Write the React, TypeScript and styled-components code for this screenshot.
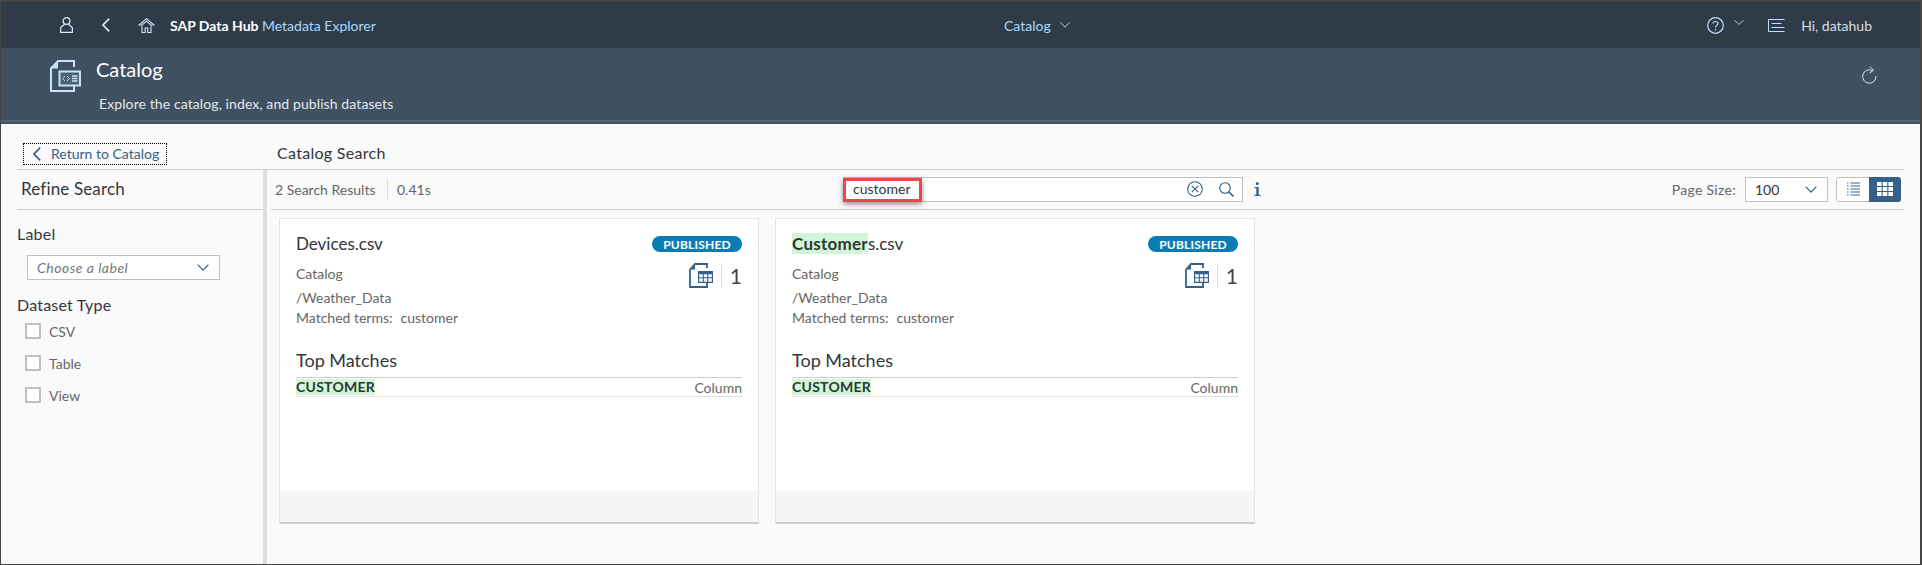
import React from 'react';
import styled, { createGlobalStyle } from 'styled-components';

const GlobalStyle = createGlobalStyle`
  html, body {
    margin: 0;
    padding: 0;
    background: #fafafa;
    font-family: Lato, "Liberation Sans", sans-serif;
  }
`;

const Frame = styled.div`
  box-sizing: border-box;
  width: 1922px;
  height: 565px;
  display: flex;
  flex-direction: column;
  border-style: solid;
  border-color: #444;
  border-width: 2px 2px 1px 1px;
  overflow: hidden;
  background: #fafafa;
  color: #32363a;
`;

const ShellBar = styled.header`
  height: 46px;
  flex: none;
  display: grid;
  grid-template-columns: 1003px auto 1fr;
  align-items: center;
  background: #2f3c48;
  color: #fff;
  font-size: 14px;
`;

const ShellLeft = styled.div`
  display: flex;
  align-items: center;
  padding-left: 59px;
`;

const ShellIcon = styled.span<{ $gap: number }>`
  display: inline-flex;
  margin-right: ${({ $gap }) => $gap}px;
  color: #d1e8ff;
`;

const HelpCaret = styled(ShellIcon)`
  margin-bottom: 6px;
  color: #a9d8ff;
`;

const ShellTitle = styled.div`
  font-weight: 700;
  white-space: nowrap;

  span {
    font-weight: 400;
    color: #a9d8ff;
  }
`;

const ShellCenter = styled.div`
  display: flex;
  align-items: center;
  gap: 9px;
  color: #a9d8ff;
`;

const ShellRight = styled.div`
  display: flex;
  justify-content: flex-end;
  align-items: center;
  padding-right: 48px;
  color: #d9dfe5;
`;

const PageHeader = styled.section`
  height: 76px;
  flex: none;
  display: flex;
  padding: 12px 43px 0 49px;
  box-sizing: border-box;
  background: #3f5161;
  box-shadow: inset 0 -2px #3f5161, inset 0 -4px #4f6578;
  color: #fff;
`;

const HeaderText = styled.div`
  margin-left: 15px;
`;

const HeaderTitle = styled.h1`
  margin: -3px 0 0;
  font-size: 20px;
  line-height: 24px;
  font-weight: 400;
`;

const HeaderSub = styled.p`
  margin: 15px 0 0 3px;
  font-size: 14px;
  line-height: 16px;
  letter-spacing: 0.1px;
  color: #e4e8ec;
`;

const HeaderRefresh = styled.span`
  margin: 6px 0 0 auto;
  display: inline-flex;
  color: #dfe5ea;
`;

const Body = styled.main`
  flex: 1;
  min-height: 0;
  display: flex;
  flex-direction: column;
`;

const CrumbRow = styled.div`
  height: 46px;
  flex: none;
  box-sizing: border-box;
  margin: 0 16px;
  padding: 0 0 4px 6px;
  display: flex;
  align-items: flex-end;
  border-bottom: 1px solid #ccc;
`;

const ReturnButton = styled.button`
  width: 144px;
  height: 22px;
  padding: 0 0 1px 9px;
  display: flex;
  align-items: center;
  gap: 10px;
  box-sizing: border-box;
  border: 1px dotted #000;
  background: transparent;
  color: #346187;
  font: inherit;
  font-size: 14px;
`;

const CrumbTitle = styled.div`
  margin: 0 0 1px 110px;
  font-size: 16px;
  line-height: 22px;
  letter-spacing: 0.3px;
  color: #32363a;
`;

const Lower = styled.div`
  flex: 1;
  min-height: 0;
  display: flex;
`;

const Sidebar = styled.aside`
  width: 262px;
  flex: none;
  box-sizing: border-box;
  padding-left: 16px;
`;

const SidebarTitle = styled.div`
  height: 40px;
  box-sizing: border-box;
  padding: 9px 0 0 4px;
  font-size: 17px;
  line-height: 20px;
  letter-spacing: 0.15px;
  border-bottom: 1px solid #ccc;
`;

const FilterLabel = styled.div<{ $top: number }>`
  margin-top: ${({ $top }) => $top}px;
  font-size: 16px;
  line-height: 20px;
  letter-spacing: 0.2px;
`;

const LabelSelect = styled.div`
  margin: 11px 0 0 10px;
  width: 193px;
  height: 25px;
  box-sizing: border-box;
  padding: 0 10px 0 9px;
  display: flex;
  align-items: center;
  justify-content: space-between;
  border: 1px solid #bfbfbf;
  background: #fff;
  font-size: 14px;
  font-style: italic;
  letter-spacing: 0.5px;
  color: #74777a;
`;

const CheckRow = styled.label`
  height: 32px;
  margin-left: 8px;
  display: flex;
  align-items: center;
  gap: 8px;
  font-size: 14px;
  color: #666;
`;

const CheckBox = styled.span`
  width: 16px;
  height: 16px;
  box-sizing: border-box;
  border: 2px solid #bfbfbf;
  background: #fff;
`;

const Splitter = styled.div`
  width: 4px;
  flex: none;
  background: #ddd;
`;

const Content = styled.div`
  flex: 1;
  min-width: 0;
  display: flex;
  flex-direction: column;
`;

const Toolbar = styled.div`
  height: 40px;
  flex: none;
  box-sizing: border-box;
  margin: 0 16px 0 4px;
  display: flex;
  align-items: center;
  border-bottom: 1px solid #ccc;
  padding-bottom: 1px;
  font-size: 14px;
  color: #666;
`;

const ResultInfo = styled.div`
  width: 572px;
  flex: none;
  box-sizing: border-box;
  padding-left: 4px;
  display: flex;
  align-items: center;
  align-self: stretch;
`;

const ResultCount = styled.span`
  width: 112px;
`;

const ResultTime = styled.span`
  align-self: stretch;
  display: flex;
  align-items: center;
  padding-left: 9px;
  border-left: 1px solid #ddd;
  margin-top: 8px;
  margin-bottom: 8px;
`;

const SearchBox = styled.div`
  position: relative;
  width: 400px;
  height: 25px;
  box-sizing: border-box;
  padding: 0 8px 0 9px;
  display: flex;
  align-items: center;
  gap: 16px;
  border: 1px solid #bfbfbf;
  background: #fff;
  color: #32363a;
`;

const SearchText = styled.span`
  flex: 1;
  padding-bottom: 2px;
`;

const RedMark = styled.span`
  position: absolute;
  left: -1px;
  top: 0;
  width: 79px;
  height: 24px;
  box-sizing: border-box;
  border: 3px solid #f0444a;
  box-shadow: 0 2px 5px rgba(0, 0, 0, 0.45);
`;

const ActionIcon = styled.span`
  display: inline-flex;
  color: #346187;
`;

const InfoMark = styled.span`
  margin-left: 11px;
  display: inline-flex;
  color: #346187;
`;

const PageSize = styled.div`
  margin-left: auto;
  display: flex;
  align-items: center;
`;

const PageLabel = styled.span`
  letter-spacing: 0.3px;
`;

const PageSelect = styled.div`
  width: 83px;
  height: 25px;
  margin-left: 9px;
  box-sizing: border-box;
  padding: 0 10px 0 9px;
  display: flex;
  align-items: center;
  justify-content: space-between;
  border: 1px solid #bfbfbf;
  background: #fff;
  color: #32363a;
`;

const ViewToggle = styled.div`
  margin: 0 3px 0 8px;
  display: flex;
  height: 25px;
  border-radius: 3px;
  border: 1px solid #bfbfbf;
  box-sizing: border-box;
`;

const ViewButton = styled.span<{ $active?: boolean }>`
  width: 32px;
  margin: ${({ $active }) => ($active ? '-1px -1px -1px 0' : '0')};
  border-radius: ${({ $active }) => ($active ? '0 3px 3px 0' : '3px 0 0 3px')};
  display: flex;
  align-items: center;
  justify-content: center;
  background: ${({ $active }) => ($active ? '#346187' : '#fff')};
  color: ${({ $active }) => ($active ? '#fff' : '#346187')};
`;

const CardRow = styled.div`
  display: flex;
  gap: 16px;
  padding: 8px 0 0 12px;
`;

const Card = styled.article`
  width: 480px;
  height: 306px;
  box-sizing: border-box;
  display: flex;
  flex-direction: column;
  background: #fff;
  border: 1px solid #e5e5e5;
  border-bottom: 2px solid #ccc;
`;

const CardBody = styled.div`
  flex: 1;
  padding: 16px 16px 0;
`;

const CardHead = styled.div`
  height: 18px;
  display: flex;
  align-items: center;
  justify-content: space-between;
`;

const CardTitle = styled.div`
  font-size: 17px;
  line-height: 18px;
  color: #32363a;
`;

const Hit = styled.mark`
  background: #d2f5d9;
  color: #2b3a30;
  font-weight: 700;
  letter-spacing: 0.25px;
`;

const Badge = styled.span`
  width: 90px;
  height: 16px;
  display: flex;
  align-items: center;
  justify-content: center;
  border-radius: 8px;
  background: #0a7db3;
  color: #fff;
  font-size: 12px;
  font-weight: 700;
  letter-spacing: 0.2px;
`;

const CardMid = styled.div`
  display: flex;
  justify-content: space-between;
  align-items: flex-start;
  margin-top: 10px;
`;

const Meta = styled.div`
  font-size: 14px;
  line-height: 20px;
  color: #666;
  padding-top: 1px;
`;

const MetaLine = styled.div<{ $top?: number }>`
  margin-top: ${({ $top }) => $top ?? 0}px;
`;

const MatchedTerm = styled.span`
  margin-left: 8px;
`;

const CountBox = styled.div`
  display: flex;
  align-items: center;
  height: 25px;
  font-size: 21px;
  color: #444;
`;

const CountValue = styled.span`
  margin-left: 8px;
  padding-left: 8px;
  border-left: 1px solid #ddd;
  line-height: 25px;
`;

const MatchesTitle = styled.div`
  margin-top: 20px;
  font-size: 18px;
  line-height: 24px;
`;

const MatchRow = styled.div`
  margin-top: 5px;
  height: 20px;
  box-sizing: border-box;
  padding-top: 1px;
  display: flex;
  align-items: flex-start;
  justify-content: space-between;
  border-top: 1px solid #ccc;
  border-bottom: 1px solid #e2e2e2;
  font-size: 14px;
  line-height: 16px;
  color: #666;
`;

const MatchColumn = styled.span`
  padding-top: 1px;
`;

const CardFoot = styled.div`
  height: 31px;
  flex: none;
  background: #f5f5f5;
`;

const UserIcon = () => (
  <svg width="13" height="16" viewBox="0 0 13 16" fill="none" stroke="currentColor" strokeWidth="1.3">
    <circle cx="6.5" cy="4" r="3.4" />
    <path d="M4.6 7.2 1 10.2a1 1 0 0 0-.4.9v4.3h11.800v-4.300a1 1 0 0 0-.4-.9L8.400 7.200" />
  </svg>
);

const BackIcon = ({ w = 8, h = 14 }: { w?: number; h?: number }) => (
  <svg width={w} height={h} viewBox="0 0 8 14" fill="none" stroke="currentColor" strokeWidth="1.7">
    <path d="M7.2.6 1 7l6.2 6.4" />
  </svg>
);

const HomeIcon = () => (
  <svg width="17" height="15" viewBox="0 0 17 15" fill="none" stroke="currentColor" strokeWidth="1.1">
    <path d="M.5 7.500 8.500.7l8 6.800M2.800 8 8.500 3.200 14.200 8M4 8.500v6h3.200v-4.500h2.600v4.500H13v-6" />
  </svg>
);

const Chevron = ({ w = 10, h = 6 }: { w?: number; h?: number }) => (
  <svg width={w} height={h} viewBox="0 0 10 6" fill="none" stroke="currentColor" strokeWidth="1" preserveAspectRatio="none">
    <path d="M.5.5 5 5.200 9.500.5" />
  </svg>
);

const HelpIcon = () => (
  <svg width="17" height="17" viewBox="0 0 17 17" fill="none" stroke="#bfe0ff" strokeWidth="1.200">
    <circle cx="8.500" cy="8.500" r="7.800" />
    <path d="M6 6.500C6 3.800 11 3.800 11 6.500 11 8.500 8.500 8.300 8.500 10.500M8.500 12v1.400" />
  </svg>
);

const RequestIcon = () => (
  <svg width="17" height="13" viewBox="0 0 17 13" fill="none" stroke="#bfe0ff" strokeWidth="1">
    <path d="M16.500.5H.5v12h16M3.500 4.500h10M3.500 8.500h13" />
  </svg>
);

const DocIcon = () => (
  <svg width="31" height="32" viewBox="0 0 31 32" fill="none">
    <path d="M24 7V1H8L1 8.500V31h23v-5" stroke="#c5e3fb" strokeWidth="2" />
    <path d="M1 8.500 8 1v7.500z" fill="#c5e3fb" />
    <rect x="9.500" y="11.500" width="20.500" height="14" fill="#4d6274" stroke="#c5e3fb" strokeWidth="2" />
    <path d="M15 16l-2.500 2.500L15 21M17 16l2.500 2.500L17 21" stroke="#c5e3fb" strokeWidth=".9" />
    <path d="M22 16h5.500M22 18.500h5.500M22 21h5.500" stroke="#c5e3fb" strokeWidth="1.300" />
  </svg>
);

const RefreshIcon = () => (
  <svg width="16" height="18" viewBox="0 0 16 18" fill="none" stroke="currentColor" strokeWidth="1">
    <path d="M11.500 4.600A6.700 6.700 0 1 0 15 10M9 .5l3.500 3.800L8.600 7" />
  </svg>
);

const ClearIcon = () => (
  <svg width="16" height="16" viewBox="0 0 16 16" fill="none" stroke="currentColor" strokeWidth="1.1">
    <circle cx="8" cy="8" r="7.300" />
    <path d="M4.800 4.800l6.400 6.400M11.200 4.800l-6.400 6.400" />
  </svg>
);

const SearchIcon = () => (
  <svg width="15" height="15" viewBox="0 0 15 15" fill="none" stroke="currentColor" strokeWidth="1.1">
    <circle cx="6" cy="6" r="5.300" />
    <path d="M9.800 9.800 14.500 14.500" strokeWidth="1.600" />
  </svg>
);

const InfoIcon = () => (
  <svg width="7" height="14" viewBox="0 0 7 14" fill="currentColor">
    <circle cx="3.300" cy="1.500" r="1.500" />
    <path d="M.5 5h4.200v7.700H6.500V14H.5v-1.300h1.800V6.300H.5z" />
  </svg>
);

const ListIcon = () => (
  <svg width="13" height="14" viewBox="0 0 13 14" fill="none" stroke="currentColor">
    <path d="M0 1h1.500M3.500 1H13M0 4h1.500M3.500 4H13M0 7h1.500M3.500 7H13M0 10h1.500M3.500 10H13M0 13h1.500M3.500 13H13" />
  </svg>
);

const GridIcon = () => (
  <svg width="16" height="14" viewBox="0 0 16 14" fill="currentColor">
    <path d="M0 0h4.600v4H0zM5.700 0h4.600v4H5.700zM11.400 0H16v4h-4.600zM0 5h4.600v4H0zM5.700 5h4.600v4H5.700zM11.400 5H16v4h-4.600zM0 10h4.600v4H0zM5.700 10h4.600v4H5.700zM11.400 10H16v4h-4.600z" />
  </svg>
);

const TableDocIcon = () => (
  <svg width="24" height="25" viewBox="0 0 24 25" fill="none">
    <path d="M18 5V1H6L1 6.500V24h17v-4" stroke="#346187" strokeWidth="1.800" />
    <path d="M1 6.500 6 1v5.500z" fill="#346187" />
    <path
      d="M9 8h15v12H9zM10.200 11.200v3h3.500v-3zM14.800 11.200v3h3.400v-3zM19.300 11.200v3h3.500v-3zM10.200 15.300v3.400h3.500v-3.400zM14.800 15.300v3.400h3.400v-3.400zM19.300 15.300v3.400h3.500v-3.400z"
      fill="#346187"
      fillRule="evenodd"
    />
  </svg>
);

const results = [
  { id: 'devices', title: <>Devices.csv</> },
  { id: 'customers', title: <><Hit>Customer</Hit>s.csv</> },
];

export default function App() {
  return (
    <Frame>
      <GlobalStyle />
      <ShellBar>
        <ShellLeft>
          <ShellIcon $gap={29}><UserIcon /></ShellIcon>
          <ShellIcon $gap={28}><BackIcon /></ShellIcon>
          <ShellIcon $gap={15}><HomeIcon /></ShellIcon>
          <ShellTitle>SAP Data Hub <span>Metadata Explorer</span></ShellTitle>
        </ShellLeft>
        <ShellCenter>
          Catalog
          <Chevron />
        </ShellCenter>
        <ShellRight>
          <ShellIcon $gap={10}><HelpIcon /></ShellIcon>
          <HelpCaret $gap={24}><Chevron w={10} h={5} /></HelpCaret>
          <ShellIcon $gap={16}><RequestIcon /></ShellIcon>
          Hi, datahub
        </ShellRight>
      </ShellBar>

      <PageHeader>
        <DocIcon />
        <HeaderText>
          <HeaderTitle>Catalog</HeaderTitle>
          <HeaderSub>Explore the catalog, index, and publish datasets</HeaderSub>
        </HeaderText>
        <HeaderRefresh><RefreshIcon /></HeaderRefresh>
      </PageHeader>

      <Body>
        <CrumbRow>
          <ReturnButton><BackIcon w={8} h={14} />Return to Catalog</ReturnButton>
          <CrumbTitle>Catalog Search</CrumbTitle>
        </CrumbRow>
        <Lower>
          <Sidebar>
            <SidebarTitle>Refine Search</SidebarTitle>
            <FilterLabel $top={14}>Label</FilterLabel>
            <LabelSelect>
              Choose a label
              <ActionIcon><Chevron w={12} h={7} /></ActionIcon>
            </LabelSelect>
            <FilterLabel $top={15}>Dataset Type</FilterLabel>
            <CheckRow><CheckBox />CSV</CheckRow>
            <CheckRow><CheckBox />Table</CheckRow>
            <CheckRow><CheckBox />View</CheckRow>
          </Sidebar>
          <Splitter />
          <Content>
            <Toolbar>
              <ResultInfo>
                <ResultCount>2 Search Results</ResultCount>
                <ResultTime>0.41s</ResultTime>
              </ResultInfo>
              <SearchBox>
                <SearchText>customer</SearchText>
                <RedMark />
                <ActionIcon><ClearIcon /></ActionIcon>
                <ActionIcon><SearchIcon /></ActionIcon>
              </SearchBox>
              <InfoMark><InfoIcon /></InfoMark>
              <PageSize>
                <PageLabel>Page Size:</PageLabel>
                <PageSelect>
                  100
                  <ActionIcon><Chevron w={12} h={7} /></ActionIcon>
                </PageSelect>
                <ViewToggle>
                  <ViewButton><ListIcon /></ViewButton>
                  <ViewButton $active><GridIcon /></ViewButton>
                </ViewToggle>
              </PageSize>
            </Toolbar>
            <CardRow>
              {results.map((r) => (
                <Card key={r.id}>
                  <CardBody>
                    <CardHead>
                      <CardTitle>{r.title}</CardTitle>
                      <Badge>PUBLISHED</Badge>
                    </CardHead>
                    <CardMid>
                      <Meta>
                        <MetaLine>Catalog</MetaLine>
                        <MetaLine $top={4}>/Weather_Data</MetaLine>
                        <MetaLine>Matched terms:<MatchedTerm>customer</MatchedTerm></MetaLine>
                      </Meta>
                      <CountBox>
                        <TableDocIcon />
                        <CountValue>1</CountValue>
                      </CountBox>
                    </CardMid>
                    <MatchesTitle>Top Matches</MatchesTitle>
                    <MatchRow>
                      <Hit>CUSTOMER</Hit>
                      <MatchColumn>Column</MatchColumn>
                    </MatchRow>
                  </CardBody>
                  <CardFoot />
                </Card>
              ))}
            </CardRow>
          </Content>
        </Lower>
      </Body>
    </Frame>
  );
}
